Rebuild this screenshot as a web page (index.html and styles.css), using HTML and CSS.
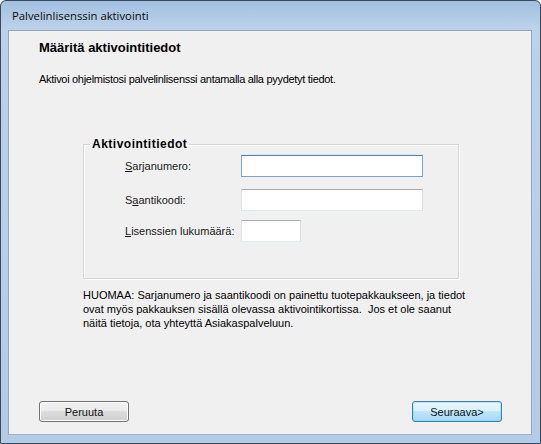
FILE: index.html
```html
<!DOCTYPE html>
<html>
<head>
<meta charset="utf-8">
<link rel="stylesheet" href="styles.css">
</head>
<body>
<div class="window">
  <div class="titlebar">Palvelinlisenssin aktivointi</div>
  <div class="content">
    <h1 class="heading">Määritä aktivointitiedot</h1>
    <p class="intro">Aktivoi ohjelmistosi palvelinlisenssi antamalla alla pyydetyt tiedot.</p>
    <fieldset class="group">
      <legend class="legend">Aktivointitiedot</legend>
      <div class="row row-1">
        <label class="label"><u>S</u>arjanumero:</label>
        <div class="input input-long input-focus"></div>
      </div>
      <div class="row row-2">
        <label class="label">S<u>a</u>antikoodi:</label>
        <div class="input input-long"></div>
      </div>
      <div class="row row-3">
        <label class="label"><u>L</u>isenssien lukumäärä:</label>
        <div class="input input-short"></div>
      </div>
    </fieldset>
    <p class="note"><span class="line">HUOMAA: Sarjanumero ja saantikoodi on painettu tuotepakkaukseen, ja tiedot</span><span class="line">ovat myös pakkauksen sisällä olevassa aktivointikortissa.&nbsp; Jos et ole saanut</span><span class="line">näitä tietoja, ota yhteyttä Asiakaspalveluun.</span></p>
    <div class="spacer"></div>
    <div class="buttons">
      <button class="btn">Peruuta</button>
      <button class="btn btn-default">Seuraava&gt;</button>
    </div>
  </div>
</div>
</body>
</html>
```

FILE: styles.css
```css
html, body {
  margin: 0;
  padding: 0;
  background: #ffffff;
}

.window {
  box-sizing: border-box;
  width: 541px;
  height: 444px;
  border: 1px solid #3a4a5c;
  border-radius: 6px 6px 0 0;
  background: linear-gradient(to bottom, #a3c0e0 0px, #bcd2ea 28px, #b4cbe6 100%);
  display: flex;
  flex-direction: column;
  padding: 0 8px 8px 7px;
  font-family: "Liberation Sans", Arial, sans-serif;
  color: #000;
}

.titlebar {
  height: 29px;
  line-height: 30px;
  padding-left: 4px;
  font-size: 11.3px;
  font-family: "Open Sans", "Liberation Sans", sans-serif;
  color: #0a0a0a;
  flex: none;
}

.content {
  flex: 1;
  background: #f0f0f0;
  border: 1px solid #8fa8c6;
  border-bottom-color: #9db4d0;
  display: flex;
  flex-direction: column;
  padding: 0 29px 0 30px;
}

.heading {
  margin: 9px 0 0 0;
  font-size: 13px;
  line-height: 16px;
  font-weight: bold;
}

.intro {
  margin: 16px 0 0 0;
  font-size: 11px;
  letter-spacing: -0.3px;
  line-height: 14px;
}

.group {
  margin: 51px 0 0 44px;
  width: 376px;
  height: 142px;
  box-sizing: border-box;
  border: 1px solid #d5d5d5;
  box-shadow: inset 1px 1px 0 #ffffff, 1px 1px 0 #ffffff;
  padding: 0 0 0 41px;
}

.legend {
  font-size: 12px;
  letter-spacing: 0.5px;
  font-weight: bold;
  padding: 0 2px;
  margin-left: -35px;
  line-height: 14px;
}

.row {
  display: flex;
  align-items: center;
  height: 22px;
}

.row-1 { margin-top: 4px; }
.row-2 { margin-top: 12px; }
.row-3 { margin-top: 9px; }

.label {
  width: 116px;
  font-size: 11px;
  line-height: 14px;
  color: #1a1a1a;
}

.input {
  box-sizing: border-box;
  height: 22px;
  background: #ffffff;
  border: 1px solid #e3e9ef;
  border-top-color: #abadb3;
  border-left-color: #e2e3ea;
  border-right-color: #dbdfe6;
}

.input-long { width: 182px; }
.input-short { width: 60px; }

.input-focus {
  border-color: #7da2ce;
  border-top-color: #5c7fa6;
  box-shadow: 0 -1px 0 #dce9f5;
}

.note {
  margin: 9px 0 0 44px;
  font-size: 11px;
  line-height: 14px;
  width: 420px;
}

.line {
  display: block;
  white-space: nowrap;
}

.spacer { flex: 1; }

.buttons {
  display: flex;
  justify-content: space-between;
  margin-bottom: 12px;
}

.btn {
  box-sizing: border-box;
  width: 90px;
  height: 21px;
  border: 1px solid #707070;
  border-radius: 3px;
  background: linear-gradient(to bottom, #f2f2f2 0%, #ebebeb 50%, #dddddd 50%, #cfcfcf 100%);
  box-shadow: inset 0 0 0 1px #fcfcfc;
  font-family: "Liberation Sans", Arial, sans-serif;
  font-size: 11px;
  color: #111;
  padding: 0;
}

.btn-default {
  border-color: #3c7fb1;
  background: linear-gradient(to bottom, #eaf6fd 0%, #d9f0fc 50%, #bee6fd 50%, #a7d9f5 100%);
  box-shadow: inset 0 0 0 1px #48d8fb55;
}
```
